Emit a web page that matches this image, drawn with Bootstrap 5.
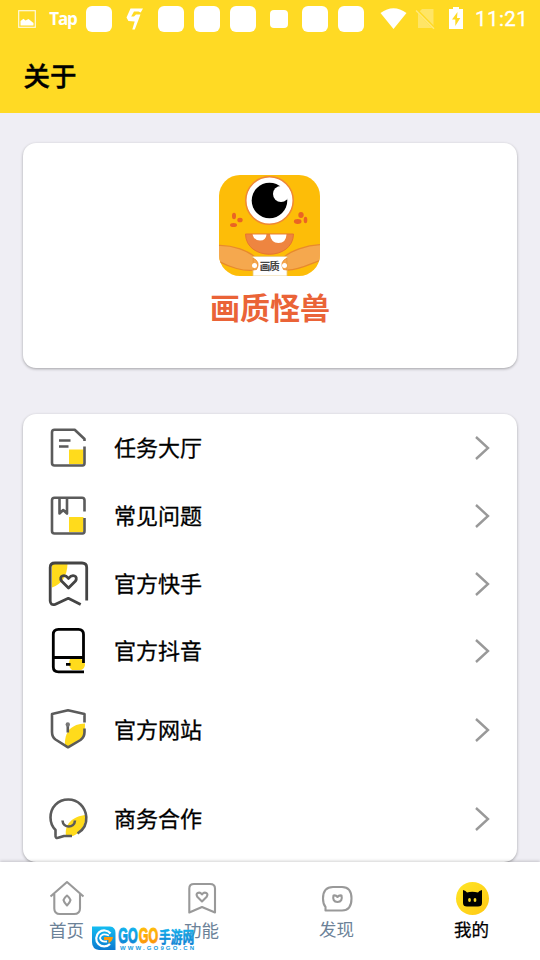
<!DOCTYPE html>
<html lang="zh-CN">
<head>
<meta charset="utf-8">
<meta name="viewport" content="width=device-width, initial-scale=1">
<title>关于</title>
<link href="https://cdn.jsdelivr.net/npm/bootstrap@5.3.0/dist/css/bootstrap.min.css" rel="stylesheet">
<style>
body{font-family:"Noto Sans CJK SC",sans-serif;background:#efeef4;color:#000;height:960px;overflow:hidden}
svg{display:block;flex:none}
.app-head{background:#ffda24;height:113px}
.status{height:38px;padding-left:9px;color:#fff;font-family:Roboto,sans-serif}
.slot{flex:none;width:36px;height:38px}
.tile{width:26px;height:26px;border-radius:6px;background:#fff}
.tile-s{width:18px;height:18px;border-radius:4px}
.tap{font:700 17px/20px "Open Sans",sans-serif;letter-spacing:-1.1px}
.clock{font-size:20.5px;line-height:38px;letter-spacing:.45px;margin-left:12px;-webkit-text-stroke:.3px #fff}
.page-title{font-size:26.5px;line-height:40px;font-weight:500;-webkit-text-stroke:.4px #000;margin:17px 0 0 23.5px}
.panel{border:0;border-radius:13px;box-shadow:0 1px 3px rgba(0,0,0,.32);margin:0 23px}
.about{height:225px;margin-top:30px;padding:32px 1px 0 0}
.brand{font-size:30px;line-height:40px;font-weight:700;color:#ea6337;margin:10px 0 0 1px}
.menu{height:448px;margin-top:46px}
.entry{height:68px;padding:1px 27px 0 22.5px;font-size:22px;font-weight:400;-webkit-text-stroke:.3px #000}
.entry span{margin-left:24.5px;line-height:30px;padding-bottom:4px}
.h67{height:67px}.h90{height:90px}.h88{height:88px}
.ic{fill:none;stroke:#5b5b5b;stroke-width:2.6;stroke-linecap:butt;stroke-linejoin:round}
.y{fill:#ffdb1c;stroke:none}
.tabs{height:98px;box-shadow:0 -1px 3px rgba(0,0,0,.18)}
.tab{width:135px;padding:18px 2px 0 0;font-size:17.5px;line-height:26px;color:#6c8298}
.tab .ic{stroke:#999;stroke-width:2.1}
.tab.on{color:#000}
.on span{-webkit-text-stroke:.25px #000}
.wm{left:90px;top:62px}
</style>
</head>
<body class="d-flex flex-column">
<header class="app-head flex-shrink-0">
  <div class="status d-flex align-items-center">
    <div class="slot d-flex align-items-center justify-content-center"><svg width="18" height="18"><rect x=".7" y=".7" width="16.6" height="16.6" fill="none" stroke="#fff" stroke-width="1.2" opacity=".85"/><path d="M2.5 15.5V11l3-2.2 2 1.8 3-1.500 5 4v2.400z" fill="#fff"/></svg></div>
    <div class="slot d-flex align-items-center justify-content-center tap">Tap</div>
    <div class="slot d-flex align-items-center justify-content-center"><div class="tile"></div></div>
    <div class="slot d-flex align-items-center justify-content-center"><svg width="18" height="22"><path d="M4.500.5H17L14.700 4.500 12.500 3.500H8L5.200 8.500H8L10 6.500H14.500L8.800 21.500H6.300L8.700 13.500 2.400 13 .5 9.500z" fill="#fff"/></svg></div>
    <div class="slot d-flex align-items-center justify-content-center"><div class="tile"></div></div>
    <div class="slot d-flex align-items-center justify-content-center"><div class="tile"></div></div>
    <div class="slot d-flex align-items-center justify-content-center"><div class="tile"></div></div>
    <div class="slot d-flex align-items-center justify-content-center"><div class="tile tile-s"></div></div>
    <div class="slot d-flex align-items-center justify-content-center"><div class="tile"></div></div>
    <div class="slot d-flex align-items-center justify-content-center"><div class="tile"></div></div>
    <svg width="94" height="38" viewBox="369 0 94 38"><path d="M380.500 13Q393.500 3.500 406.500 13L393.500 29z" fill="#fff"/><path d="M418 13l4-4h11.500v19H418z" fill="#fff" opacity=".3"/><path d="M416.500 10l18 18.500" stroke="#ffda24" stroke-width="3"/><path d="M416 10.500l18 18.300" stroke="#fff" opacity=".4" stroke-width="1.400"/><path d="M449 9h4V7h6v2h4v20h-14z" fill="#fff"/><path d="M457.500 12l-5.500 7.500h3.300V26l5-8h-3.300z" fill="#ffda24"/></svg>
    <div class="clock">11:21</div>
  </div>
  <h1 class="page-title">关于</h1>
</header>

<main class="flex-shrink-0">
  <section class="card panel about align-items-center">
    <svg width="101" height="101" viewBox="0 0 101 101">
      <defs><clipPath id="app"><rect width="101" height="101" rx="21"/></clipPath></defs>
      <g clip-path="url(#app)">
        <rect width="101" height="101" fill="#fdbd08"/>
        <circle cx="50.500" cy="25.500" r="23.700" fill="#fff" stroke="#ef8735" stroke-width="1.500"/>
        <circle cx="50.500" cy="25.500" r="17.800"/><circle cx="62" cy="19" r="8" fill="#fff"/>
        <g fill="#ea6424"><ellipse cx="15" cy="41" rx="2" ry="3.200"/><ellipse cx="21" cy="45" rx="2.700" ry="2.300"/><ellipse cx="14.500" cy="50" rx="3.500" ry="2"/><ellipse cx="82" cy="40" rx="2.700" ry="3"/><ellipse cx="86.500" cy="45" rx="1.800" ry="3.200"/><ellipse cx="78.700" cy="46.500" rx="3.800" ry="2.400"/></g>
        <path d="M26.500 59H74.500C74 86 27 86 26.500 59z" fill="#ee8540" stroke="#e67430"/>
        <path d="M33.500 59.500H47.500Q47 65.500 41 65.500 35 65.500 33.500 59.500zM51 59.500H67.500Q67 68 59.500 68 52 68 51 59.500z" fill="#fff"/>
        <g fill="#f5a84e" stroke="#e88a2c" stroke-width="1.200"><path d="M-1 70.500C14 70 30 76 37 83Q41 90 36 95C25 97 10 92-1 86z"/><path d="M102 69.500C87 70 71 76 64 83Q61 90 67 95C78 96 91 89 102 85z"/></g>
        <path d="M34 81.500H68V101H34z" fill="#fff" stroke="#e9c87c" stroke-width=".8"/>
        <path d="M34 83Q42 87 37.500 94.500L34 95zM68 83Q60 87 64.500 94.500L68 95z" fill="#f5a84e" stroke="#e88a2c" stroke-width=".8"/>
        <circle cx="35.500" cy="90.500" r="2.500" fill="#fff"/><circle cx="65.500" cy="90.500" r="2.500" fill="#fff"/>
        <text x="50.800" y="94.500" font-size="10.500" font-weight="700" text-anchor="middle" fill="#444" textLength="20">画质</text>
      </g>
    </svg>
    <div class="brand">画质怪兽</div>
  </section>

  <section class="card panel menu">
    <div class="entry d-flex align-items-center"><svg class="ic" width="44" height="48"><path class="y" d="M23 25.500h14.500V40H23z"/><path d="M38.500 17V15L28.700 5.800H8.500Q6 5.800 6 8.300V39Q6 41.500 8.500 41.500H36.500Q38.500 41.500 38.500 39V22.500M13 16.500H24.500M13 22.500H22.500"/></svg><span>任务大厅</span><svg class="ic ms-auto" width="16" height="26"><path d="M2 2L14 13 2 24" stroke="#999" stroke-width="2.400" stroke-linejoin="miter"/></svg></div>
    <div class="entry d-flex align-items-center"><svg class="ic" width="44" height="48"><path class="y" d="M23 25h14.500v15H23z"/><path d="M38.500 19.500V8.300Q38.500 5.800 36 5.800H8.500Q6 5.800 6 8.300V39Q6 41.500 8.500 41.500H36.500Q38.500 41.500 38.500 39V26M13.500 6V21.500L17.200 18 21 21.500V6"/></svg><span>常见问题</span><svg class="ic ms-auto" width="16" height="26"><path d="M2 2L14 13 2 24" stroke="#999" stroke-width="2.400" stroke-linejoin="miter"/></svg></div>
    <div class="entry h67 d-flex align-items-center"><svg class="ic" width="44" height="48"><path class="y" d="M6 4H21.500Q21 22 6 27.500z"/><path stroke="#444" stroke-width="2.800" d="M40.700 40.500V7.500Q40.700 3 36 3H9Q4.200 3 4.200 7.500V41Q4.500 45.500 9 44.500L22.300 38.300 34.700 44.500M22.500 28L15.500 21C12.500 16 18.500 13.500 22.500 18.500 26.500 13.500 32.500 16 29.500 21z"/></svg><span>官方快手</span><svg class="ic ms-auto" width="16" height="26"><path d="M2 2L14 13 2 24" stroke="#999" stroke-width="2.400" stroke-linejoin="miter"/></svg></div>
    <div class="entry d-flex align-items-center"><svg class="ic" width="44" height="48"><path class="y" d="M24 32H35Q39 34 39 38 38 43 34 43H26Q21 39 24 32z"/><path stroke="#000" stroke-width="2.800" d="M37.500 36V7.500Q37.500 2.400 32.500 2.400H12.500Q7.300 2.400 7.300 7.500V40Q7.300 44.800 12.500 44.800H38M7.300 30.500H37.500M20 37.300H24.500"/></svg><span>官方抖音</span><svg class="ic ms-auto" width="16" height="26"><path d="M2 2L14 13 2 24" stroke="#999" stroke-width="2.400" stroke-linejoin="miter"/></svg></div>
    <div class="entry h90 d-flex align-items-center"><svg class="ic" width="44" height="48"><path class="y" d="M39 17.500C26 18 18 25 19 40L22 41 36 33Q39 29 39 17.500z"/><path d="M38.500 16.500V8L22 4.200 6 8V26Q6 31 9.500 33.500L22 41.300 34.500 34Q38.500 31 38.500 26V22.500M21.800 18V26.500"/><circle cx="21.800" cy="18.500" r="2.200" fill="#777" stroke="none"/></svg><span>官方网站</span><svg class="ic ms-auto" width="16" height="26"><path d="M2 2L14 13 2 24" stroke="#999" stroke-width="2.400" stroke-linejoin="miter"/></svg></div>
    <div class="entry h88 d-flex align-items-center"><svg class="ic" width="44" height="48"><path class="y" d="M40 20C27 21 18 29 20 41H27Q39 36 40 20z"/><path d="M31.500 38.500C39 34 40.700 28 40.300 22 39.500 12 32 4.500 22.300 4.500 12 4.500 4.500 12 4.500 22.500 4.500 28 6.500 32 9.500 35V40Q9 44 13 42.500L18 41H26M16.500 25.500C17 33.500 28.500 33.500 29 25.500"/></svg><span>商务合作</span><svg class="ic ms-auto" width="16" height="26"><path d="M2 2L14 13 2 24" stroke="#999" stroke-width="2.400" stroke-linejoin="miter"/></svg></div>
  </section>
</main>

<nav class="tabs bg-white d-flex flex-shrink-0 position-relative">
  <div class="tab d-flex flex-column align-items-center"><svg class="ic" width="36" height="37"><path d="M1.500 16.500L18 2 34.500 16.500M5.300 14V28.500Q5.300 34 11 34H25Q31 34 31 28.500V14M18 15.500Q21 18 21.500 20 21 22.500 18 25.500 15 22.500 14.500 20 15 18 18 15.500z"/></svg><span>首页</span></div>
  <div class="tab d-flex flex-column align-items-center"><svg class="ic" width="36" height="37"><path d="M5.300 32.500V8.500Q5.300 4 10 4H26Q31 4 31 8.500V32.500L18 27zM18 21.500L13.500 17C10.500 13 15.500 11 18 14.500 20.500 11 25.500 13 22.500 17z"/></svg><span>功能</span></div>
  <div class="tab d-flex flex-column align-items-center"><svg class="ic" width="36" height="36"><path d="M6.500 30.500V27Q4 24 4 18.500 4 7 14 7H23Q32.500 7 32.500 18.500 32.500 30.500 23 30.500zM14.500 15.500Q17 15 18.500 17 20 15 22.500 15.500 24 21.500 18.500 22 13 21.500 14.500 15.500z"/></svg><span>发现</span></div>
  <div class="tab on d-flex flex-column align-items-center"><svg width="36" height="36"><defs><linearGradient id="sun" x1="0" y1="0" x2="1" y2="1"><stop stop-color="#ffe626"/><stop offset="1" stop-color="#ffc814"/></linearGradient></defs><circle cx="18.500" cy="18.500" r="16.500" fill="url(#sun)"/><path d="M9 10Q12 10.500 13 12.500 18 11 24 12.500 25 10.500 28 10V23Q28 26.500 24 26.500H13Q9 26.500 9 23z"/><g fill="#ffdc22"><ellipse cx="15.500" cy="20" rx="1.400" ry="2"/><ellipse cx="21" cy="20" rx="1.400" ry="2"/></g></svg><span>我的</span></div>
  <svg class="wm position-absolute" width="110" height="30">
    <defs>
      <linearGradient id="bl" x1="0" y1="0" x2="0" y2="1"><stop stop-color="#14bdf2"/><stop offset="1" stop-color="#0b79cf"/></linearGradient>
      <linearGradient id="og" x1="0" y1="0" x2="0" y2="1"><stop stop-color="#ffc60a"/><stop offset="1" stop-color="#fa8a08"/></linearGradient>
    </defs>
    <path d="M2 2.500H20Q25.500 3 25.500 9V26H9Q2 25 2 18z" fill="url(#bl)"/>
    <path d="M20.500 9.500A8 8 0 1 0 20 20" fill="none" stroke="#fff" stroke-width="2.200"/><path d="M19 11.500Q11 8.500 10 14 11 18.500 17 17.500" fill="none" stroke="#fff" stroke-width="1.800"/><path d="M14 13H23Q22.500 17.500 18.500 19V16H14z" fill="#ff9b0a"/>
    <g font-family="Liberation Sans,sans-serif" font-weight="700" font-size="21.500" stroke-width="1"><text transform="translate(28.300 19.200) scale(.58 1)" fill="url(#bl)" stroke="url(#bl)">GO</text><text transform="translate(48.800 19.200) scale(.58 1)" fill="url(#og)" stroke="url(#og)">GO</text></g>
    <text transform="translate(69 18.500) scale(.76 1)" font-size="15.500" font-weight="700" fill="url(#bl)" stroke="url(#bl)" stroke-width=".5">手游网</text>
    <text x="30" y="26.300" font-family="Liberation Sans,sans-serif" font-weight="700" font-size="6" textLength="74" fill="#159be0">WWW.GO9GO.CN</text>
  </svg>
</nav>
<script src="https://cdn.jsdelivr.net/npm/bootstrap@5.3.0/dist/js/bootstrap.bundle.min.js"></script>
</body>
</html>
